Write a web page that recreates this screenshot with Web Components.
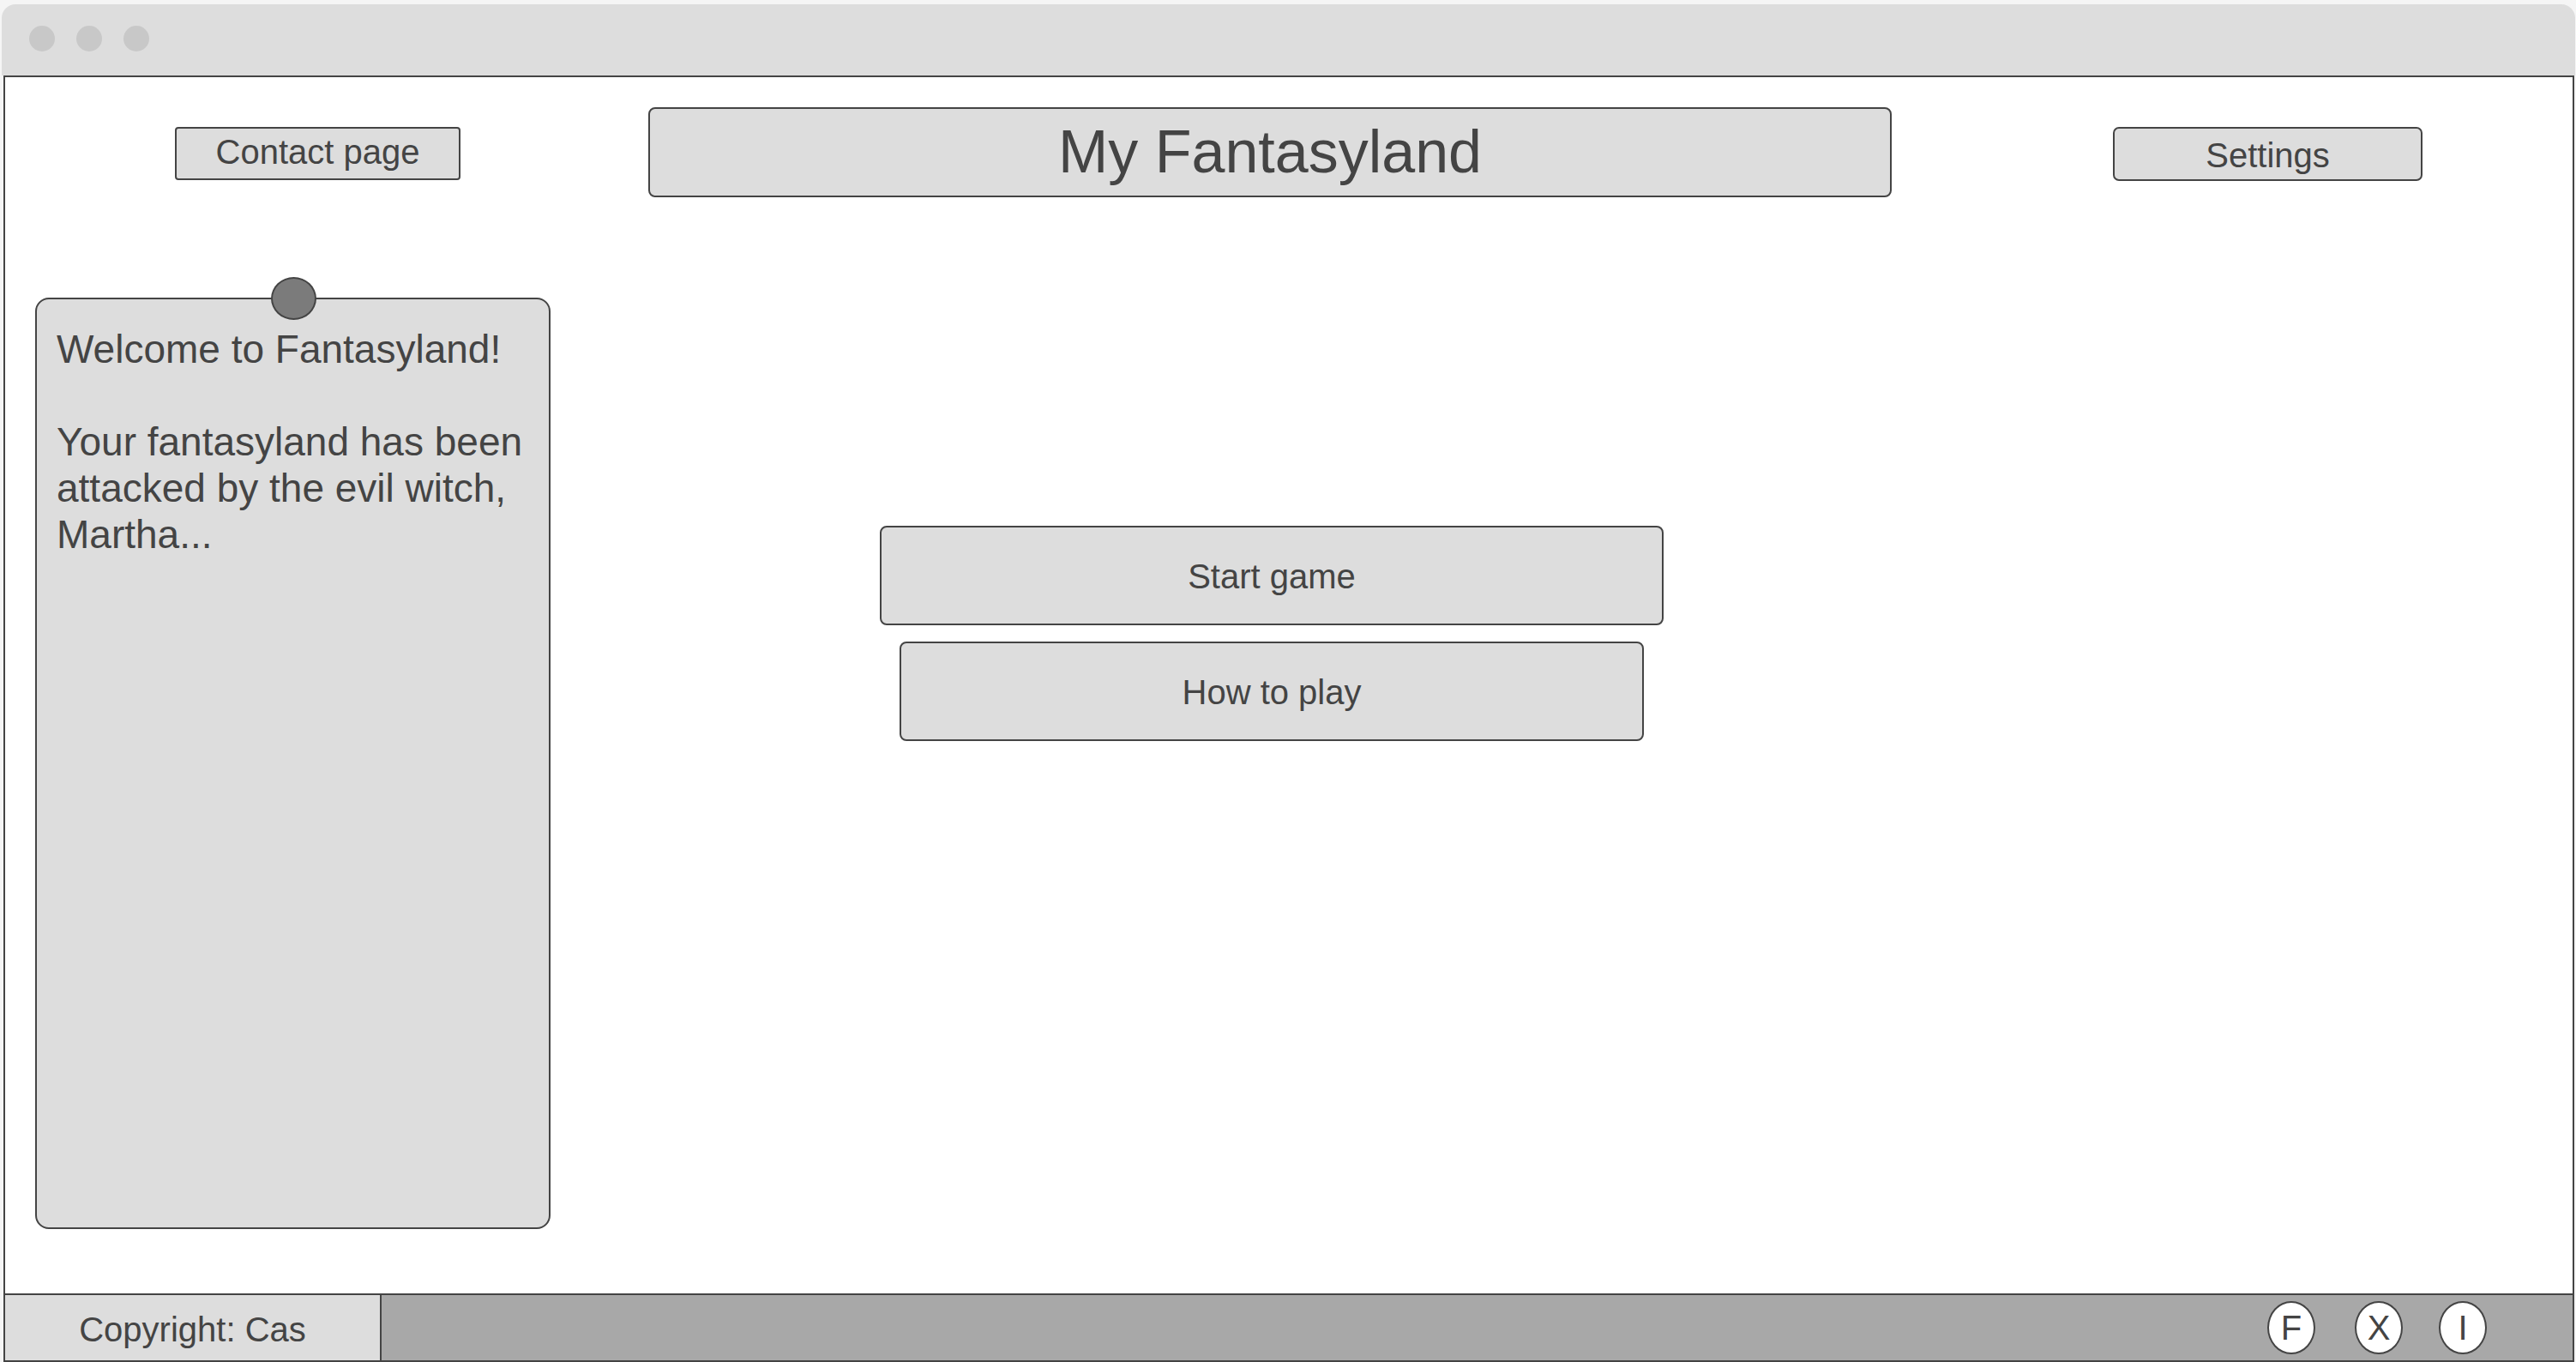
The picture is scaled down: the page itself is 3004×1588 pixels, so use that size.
<!DOCTYPE html>
<html lang="en">
<head>
<meta charset="utf-8">
<title>My Fantasyland</title>
<style>
  html, body {
    margin: 0;
    height: 100%;
    background: #f5f5f5;
    font-family: "Liberation Sans", Arial, sans-serif;
    color: #444;
  }

  #contact { width: 333px; height: 62px; margin: 23px 0 0 198px; --radius: 4px; --pad-bottom: 3px; }
  #title { width: 1450px; height: 105px; margin-left: 219px; font-size: 70px; --radius: 8px; --pad-bottom: 2px; }
  #settings { width: 361px; height: 63px; margin: 23px 0 0 258px; --pad-top: 3px; }
  #start { width: 914px; height: 116px; --radius: 8px; --pad-top: 2px; }
  #how { width: 868px; height: 116px; --radius: 8px; --pad-top: 2px; }
  #fb { margin-right: 46px; }
  #tw { margin-right: 42px; }
</style>
</head>
<body>

<fl-window>
  <fl-header>
    <fl-box id="contact">Contact page</fl-box>
    <fl-box id="title">My Fantasyland</fl-box>
    <fl-box id="settings">Settings</fl-box>
  </fl-header>
  <fl-main>
    <fl-panel>Welcome to Fantasyland!<br><br>Your fantasyland has been attacked by the evil witch, Martha...</fl-panel>
    <fl-menu>
      <fl-box id="start">Start game</fl-box>
      <fl-box id="how">How to play</fl-box>
    </fl-menu>
  </fl-main>
  <fl-footer copyright="Copyright: Cas">
    <fl-social id="fb">F</fl-social>
    <fl-social id="tw">X</fl-social>
    <fl-social>I</fl-social>
  </fl-footer>
</fl-window>

<script>
  class FlWindow extends HTMLElement {
    constructor() {
      super();
      this.attachShadow({ mode: 'open' });
      this.shadowRoot.innerHTML = `
        <style>
          :host {
            display: flex;
            flex-direction: column;
            box-sizing: border-box;
            height: 1588px;
            padding: 5px 0 0 2px;
          }
          .bar {
            display: flex;
            align-items: center;
            gap: 25px;
            flex: none;
            box-sizing: border-box;
            width: 3001px;
            height: 83px;
            padding: 0 0 3px 32px;
            background: #ddd;
            border-radius: 16px 16px 0 0;
          }
          .dot {
            width: 30px;
            height: 30px;
            border-radius: 50%;
            background: #c8c8c8;
          }
          .frame {
            display: flex;
            flex-direction: column;
            flex: 1;
            box-sizing: border-box;
            width: 2998px;
            margin-left: 2px;
            background: #fff;
            border: solid #444;
            border-width: 2px 2px 0;
          }
        </style>
        <div class="bar">
          <span class="dot"></span><span class="dot"></span><span class="dot"></span>
        </div>
        <div class="frame"><slot></slot></div>
      `;
    }
  }

  class FlHeader extends HTMLElement {
    constructor() {
      super();
      this.attachShadow({ mode: 'open' });
      this.shadowRoot.innerHTML = `
        <style>
          :host {
            display: flex;
            align-items: flex-start;
            flex: none;
            padding-top: 35px;
          }
        </style>
        <slot></slot>
      `;
    }
  }

  class FlBox extends HTMLElement {
    constructor() {
      super();
      this.attachShadow({ mode: 'open' });
      this.shadowRoot.innerHTML = `
        <style>
          :host {
            display: flex;
            align-items: center;
            justify-content: center;
            flex: none;
            box-sizing: border-box;
            padding-top: var(--pad-top, 0);
            padding-bottom: var(--pad-bottom, 0);
            background: #ddd;
            border: 2px solid #444;
            border-radius: var(--radius, 7px);
            font-size: 40px;
          }
        </style>
        <slot></slot>
      `;
    }
  }

  class FlMain extends HTMLElement {
    constructor() {
      super();
      this.attachShadow({ mode: 'open' });
      this.shadowRoot.innerHTML = `
        <style>
          :host {
            display: flex;
            align-items: flex-start;
            flex: 1;
            padding: 117px 0 0 35px;
          }
        </style>
        <slot></slot>
      `;
    }
  }

  class FlPanel extends HTMLElement {
    constructor() {
      super();
      this.attachShadow({ mode: 'open' });
      this.shadowRoot.innerHTML = `
        <style>
          :host {
            display: block;
            position: relative;
            flex: none;
            box-sizing: border-box;
            width: 601px;
            height: 1086px;
            padding: 31px 23px 0;
            background: #ddd;
            border: 2px solid #444;
            border-radius: 16px;
            font-size: 46px;
            line-height: 54px;
          }
          .pin {
            position: absolute;
            top: -26px;
            left: 273px;
            box-sizing: border-box;
            width: 53px;
            height: 50px;
            background: #7b7b7b;
            border: 2px solid #444;
            border-radius: 50%;
          }
        </style>
        <span class="pin"></span>
        <slot></slot>
      `;
    }
  }

  class FlMenu extends HTMLElement {
    constructor() {
      super();
      this.attachShadow({ mode: 'open' });
      this.shadowRoot.innerHTML = `
        <style>
          :host {
            display: flex;
            flex-direction: column;
            align-items: center;
            gap: 19px;
            flex: none;
            width: 914px;
            margin: 266px 0 0 384px;
          }
        </style>
        <slot></slot>
      `;
    }
  }

  class FlFooter extends HTMLElement {
    constructor() {
      super();
      this.attachShadow({ mode: 'open' });
      this.shadowRoot.innerHTML = `
        <style>
          :host {
            display: flex;
            flex: none;
            box-sizing: border-box;
            height: 80px;
            background: #a8a8a8;
            border-top: 2px solid #444;
            border-bottom: 2px solid #444;
          }
          .copy {
            display: flex;
            align-items: center;
            justify-content: center;
            box-sizing: border-box;
            width: 439px;
            padding-top: 4px;
            background: #ddd;
            border-right: 2px solid #444;
            font-size: 40px;
          }
          .links {
            display: flex;
            align-items: center;
            padding-left: 2199px;
          }
        </style>
        <div class="copy"></div>
        <div class="links"><slot></slot></div>
      `;
    }

    connectedCallback() {
      this.shadowRoot.querySelector('.copy').textContent = this.getAttribute('copyright');
    }
  }

  class FlSocial extends HTMLElement {
    constructor() {
      super();
      this.attachShadow({ mode: 'open' });
      this.shadowRoot.innerHTML = `
        <style>
          :host {
            display: flex;
            align-items: center;
            justify-content: center;
            flex: none;
            box-sizing: border-box;
            width: 56px;
            height: 62px;
            background: #fff;
            border: 2px solid #444;
            border-radius: 50%;
            font-size: 40px;
          }
        </style>
        <slot></slot>
      `;
    }
  }

  customElements.define('fl-window', FlWindow);
  customElements.define('fl-header', FlHeader);
  customElements.define('fl-box', FlBox);
  customElements.define('fl-main', FlMain);
  customElements.define('fl-panel', FlPanel);
  customElements.define('fl-menu', FlMenu);
  customElements.define('fl-footer', FlFooter);
  customElements.define('fl-social', FlSocial);
</script>
</body>
</html>
